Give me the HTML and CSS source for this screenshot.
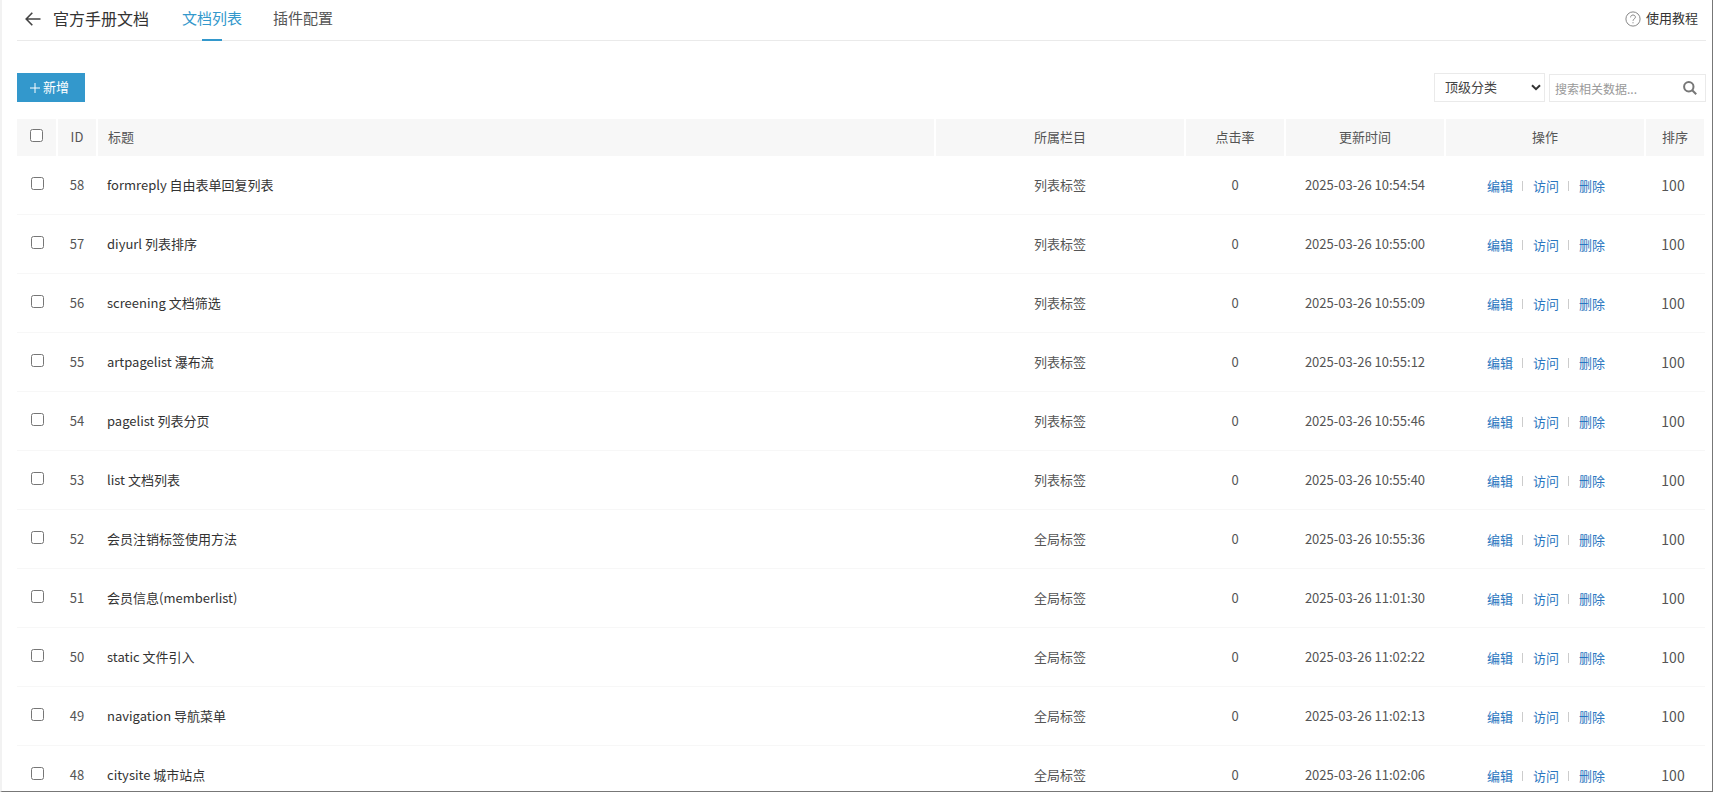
FILE: index.html
```html
<!DOCTYPE html>
<html lang="zh-CN">
<head>
    <meta charset="UTF-8">
    <meta name="viewport" content="width=device-width, initial-scale=1.0">
    <title>官方手册文档</title>
    <link rel="stylesheet" href="styles.css">
</head>
<body>
    <div class="page">
        <header class="header">
            <a class="back" href="#" aria-label="返回">
                <svg width="16" height="14" viewBox="0 0 16 14" fill="none" stroke="#444" stroke-width="1.6"><path d="M7.3 0.8 1.2 7l6.1 6.2M1.2 7H15.5"/></svg>
            </a>
            <h1 class="title">官方手册文档</h1>
            <nav class="tabs">
                <a class="tab active" href="#">文档列表</a>
                <a class="tab" href="#">插件配置</a>
            </nav>
            <a class="help" href="#">
                <svg width="16" height="16" viewBox="0 0 16 16" fill="none" stroke="#888" stroke-width="1"><circle cx="8" cy="8" r="7.1"/><path d="M5.6 6.4C5.6 4.9 6.6 4 8 4s2.4.9 2.4 2.2C10.4 7.900 8 7.900 8 9.800M8 11.200v1.100"/></svg>
                <span>使用教程</span>
            </a>
        </header>

        <div class="toolbar">
            <button class="btn-add" type="button">
                <svg width="10" height="10" viewBox="0 0 10 10" stroke="#fff" stroke-width="1"><path d="M5 0v10M0 5h10"/></svg>
                <span>新增</span>
            </button>
            <form class="search">
                <div class="select-box">
                    <select class="select" aria-label="分类">
                        <option>顶级分类</option>
                    </select>
                    <svg class="arrow" width="10" height="7" viewBox="0 0 10 7" fill="none" stroke="#333" stroke-width="2"><path d="M1 1.200 5 5.200 9 1.200"/></svg>
                </div>
                <div class="search-box">
                    <input class="keyword" type="text" placeholder="搜索相关数据..." aria-label="搜索">
                    <button class="btn-search" type="button" aria-label="搜索">
                        <svg width="14" height="14" viewBox="0 0 14 14" fill="none" stroke="#777" stroke-width="2"><circle cx="5.800" cy="5.800" r="4.700"/><path d="M9.200 9.200 13.200 13.200"/></svg>
                    </button>
                </div>
            </form>
        </div>

        <table class="list">
            <thead>
                <tr>
                    <th class="col-check"><input type="checkbox" aria-label="全选"></th>
                    <th class="col-id">ID</th>
                    <th class="col-title">标题</th>
                    <th class="col-type">所属栏目</th>
                    <th class="col-click">点击率</th>
                    <th class="col-time">更新时间</th>
                    <th class="col-operate">操作</th>
                    <th class="col-sort">排序</th>
                </tr>
            </thead>
            <tbody>
                <tr>
                    <td class="col-check"><input type="checkbox" aria-label="58"></td>
                    <td>58</td>
                    <td class="col-title"><a href="#">formreply 自由表单回复列表</a></td>
                    <td>列表标签</td>
                    <td>0</td>
                    <td>2025-03-26 10:54:54</td>
                    <td><div class="operate"><a href="#">编辑</a><i></i><a href="#">访问</a><i></i><a href="#">删除</a></div></td>
                    <td><input class="sort" type="text" value="100" aria-label="排序"></td>
                </tr>
                <tr>
                    <td class="col-check"><input type="checkbox" aria-label="57"></td>
                    <td>57</td>
                    <td class="col-title"><a href="#">diyurl 列表排序</a></td>
                    <td>列表标签</td>
                    <td>0</td>
                    <td>2025-03-26 10:55:00</td>
                    <td><div class="operate"><a href="#">编辑</a><i></i><a href="#">访问</a><i></i><a href="#">删除</a></div></td>
                    <td><input class="sort" type="text" value="100" aria-label="排序"></td>
                </tr>
                <tr>
                    <td class="col-check"><input type="checkbox" aria-label="56"></td>
                    <td>56</td>
                    <td class="col-title"><a href="#">screening 文档筛选</a></td>
                    <td>列表标签</td>
                    <td>0</td>
                    <td>2025-03-26 10:55:09</td>
                    <td><div class="operate"><a href="#">编辑</a><i></i><a href="#">访问</a><i></i><a href="#">删除</a></div></td>
                    <td><input class="sort" type="text" value="100" aria-label="排序"></td>
                </tr>
                <tr>
                    <td class="col-check"><input type="checkbox" aria-label="55"></td>
                    <td>55</td>
                    <td class="col-title"><a href="#">artpagelist 瀑布流</a></td>
                    <td>列表标签</td>
                    <td>0</td>
                    <td>2025-03-26 10:55:12</td>
                    <td><div class="operate"><a href="#">编辑</a><i></i><a href="#">访问</a><i></i><a href="#">删除</a></div></td>
                    <td><input class="sort" type="text" value="100" aria-label="排序"></td>
                </tr>
                <tr>
                    <td class="col-check"><input type="checkbox" aria-label="54"></td>
                    <td>54</td>
                    <td class="col-title"><a href="#">pagelist 列表分页</a></td>
                    <td>列表标签</td>
                    <td>0</td>
                    <td>2025-03-26 10:55:46</td>
                    <td><div class="operate"><a href="#">编辑</a><i></i><a href="#">访问</a><i></i><a href="#">删除</a></div></td>
                    <td><input class="sort" type="text" value="100" aria-label="排序"></td>
                </tr>
                <tr>
                    <td class="col-check"><input type="checkbox" aria-label="53"></td>
                    <td>53</td>
                    <td class="col-title"><a href="#">list 文档列表</a></td>
                    <td>列表标签</td>
                    <td>0</td>
                    <td>2025-03-26 10:55:40</td>
                    <td><div class="operate"><a href="#">编辑</a><i></i><a href="#">访问</a><i></i><a href="#">删除</a></div></td>
                    <td><input class="sort" type="text" value="100" aria-label="排序"></td>
                </tr>
                <tr>
                    <td class="col-check"><input type="checkbox" aria-label="52"></td>
                    <td>52</td>
                    <td class="col-title"><a href="#">会员注销标签使用方法</a></td>
                    <td>全局标签</td>
                    <td>0</td>
                    <td>2025-03-26 10:55:36</td>
                    <td><div class="operate"><a href="#">编辑</a><i></i><a href="#">访问</a><i></i><a href="#">删除</a></div></td>
                    <td><input class="sort" type="text" value="100" aria-label="排序"></td>
                </tr>
                <tr>
                    <td class="col-check"><input type="checkbox" aria-label="51"></td>
                    <td>51</td>
                    <td class="col-title"><a href="#">会员信息(memberlist)</a></td>
                    <td>全局标签</td>
                    <td>0</td>
                    <td>2025-03-26 11:01:30</td>
                    <td><div class="operate"><a href="#">编辑</a><i></i><a href="#">访问</a><i></i><a href="#">删除</a></div></td>
                    <td><input class="sort" type="text" value="100" aria-label="排序"></td>
                </tr>
                <tr>
                    <td class="col-check"><input type="checkbox" aria-label="50"></td>
                    <td>50</td>
                    <td class="col-title"><a href="#">static 文件引入</a></td>
                    <td>全局标签</td>
                    <td>0</td>
                    <td>2025-03-26 11:02:22</td>
                    <td><div class="operate"><a href="#">编辑</a><i></i><a href="#">访问</a><i></i><a href="#">删除</a></div></td>
                    <td><input class="sort" type="text" value="100" aria-label="排序"></td>
                </tr>
                <tr>
                    <td class="col-check"><input type="checkbox" aria-label="49"></td>
                    <td>49</td>
                    <td class="col-title"><a href="#">navigation 导航菜单</a></td>
                    <td>全局标签</td>
                    <td>0</td>
                    <td>2025-03-26 11:02:13</td>
                    <td><div class="operate"><a href="#">编辑</a><i></i><a href="#">访问</a><i></i><a href="#">删除</a></div></td>
                    <td><input class="sort" type="text" value="100" aria-label="排序"></td>
                </tr>
                <tr>
                    <td class="col-check"><input type="checkbox" aria-label="48"></td>
                    <td>48</td>
                    <td class="col-title"><a href="#">citysite 城市站点</a></td>
                    <td>全局标签</td>
                    <td>0</td>
                    <td>2025-03-26 11:02:06</td>
                    <td><div class="operate"><a href="#">编辑</a><i></i><a href="#">访问</a><i></i><a href="#">删除</a></div></td>
                    <td><input class="sort" type="text" value="100" aria-label="排序"></td>
                </tr>
            </tbody>
        </table>
    </div>
</body>
</html>
```
FILE: styles.css
```css
* {
    box-sizing: border-box;
}
body {
    margin: 0;
    font-family: "Noto Sans CJK SC", "Noto Sans", sans-serif;
    font-size: 13px;
    line-height: 20px;
    color: #555;
    background: #fff;
}
a {
    text-decoration: none;
    color: inherit;
}
input, select, button {
    font-family: inherit;
    margin: 0;
}
.page {
    height: 100vh;
    overflow: hidden;
    padding: 0 6px 0 15px;
    border-left: 2px solid #f2f2f2;
    border-right: 1px solid #777;
    border-bottom: 1px solid #777;
}

/* header */
.header {
    display: flex;
    align-items: center;
    height: 41px;
    padding: 0 8px 2px 8px;
    border-bottom: 1px solid #eaeaea;
}
.back {
    display: flex;
    margin-right: 12px;
}
.title {
    margin: 0 33px 0 0;
    padding-bottom: 2px;
    font-size: 16px;
    font-weight: normal;
    color: #333;
}
.tabs {
    display: flex;
    gap: 31px;
    height: 100%;
}
.tab {
    position: relative;
    font-size: 15px;
    line-height: 36px;
}
.tab.active {
    color: #3398cc;
}
.tab.active::after {
    content: "";
    position: absolute;
    left: 20px;
    bottom: -3px;
    width: 20px;
    height: 2px;
    background: #3398cc;
}
.help {
    display: flex;
    align-items: center;
    gap: 5px;
    margin-left: auto;
    color: #333;
}
.help span {
    padding-bottom: 2px;
}

/* toolbar */
.toolbar {
    display: flex;
    justify-content: space-between;
    align-items: flex-start;
    padding: 32px 0 17px;
}
.btn-add {
    display: flex;
    align-items: center;
    gap: 3px;
    height: 29px;
    padding: 0 16px 0 13px;
    border: 0;
    font-size: 13px;
    color: #fff;
    background: #3398cc;
    cursor: pointer;
}
.btn-add span {
    padding-bottom: 2px;
}
.search {
    display: flex;
    gap: 4px;
}
.select-box {
    position: relative;
}
.select {
    appearance: none;
    width: 111px;
    height: 29px;
    padding: 0 10px 2px;
    border: 1px solid #eaeaea;
    border-radius: 0;
    font-size: 13px;
    color: #444;
    background: #fff;
}
.arrow {
    position: absolute;
    right: 4px;
    top: 11px;
    pointer-events: none;
}
.search-box {
    display: flex;
    align-items: center;
    width: 157px;
    height: 28px;
    margin-top: 1px;
    border: 1px solid #eaeaea;
}
.keyword {
    flex: 1;
    min-width: 0;
    height: 26px;
    padding: 0 5px;
    border: 0;
    font-size: 12px;
    background: none;
    outline: 0;
}
.keyword::placeholder {
    color: #999;
}
.btn-search {
    display: flex;
    padding: 0 8px;
    border: 0;
    background: none;
    cursor: pointer;
}

/* list */
.list {
    width: calc(100% - 1px);
    table-layout: fixed;
    border-collapse: separate;
    border-spacing: 0;
    text-align: center;
}
.list th {
    height: 37px;
    padding: 0 0 2px;
    border: 1px solid #fff;
    border-width: 0 1px;
    font-weight: normal;
    background: #f7f7f7;
}
.list th:first-child {
    border-left: 0;
}
.list td {
    height: 59px;
    padding: 0;
    border-bottom: 1px solid #f7f7f7;
}
.list .col-title {
    padding-left: 10px;
    text-align: left;
}
td.col-title {
    color: #333;
}
.list input[type="checkbox"] {
    display: block;
    width: 13px;
    height: 13px;
    margin: 0 auto 4px;
}
.list th input[type="checkbox"] {
    margin-bottom: 2px;
}
.col-check {
    width: 40px;
}
.col-id {
    width: 40px;
}
.col-type {
    width: 250px;
}
.col-click {
    width: 100px;
}
.col-time {
    width: 160px;
}
.col-operate {
    width: 200px;
}
.col-sort {
    width: 60px;
}
.operate {
    display: flex;
    justify-content: center;
    align-items: center;
    padding: 2px 0 0 2px;
    color: #2a76c0;
}
.operate i {
    width: 1px;
    height: 10px;
    margin: 0 10px 0 9px;
    background: #ccc;
}
.sort {
    width: 40px;
    height: 24px;
    padding: 0 4px 0 0;
    border: 0;
    font-size: 14px;
    text-align: center;
    color: #555;
    background: none;
}
```
